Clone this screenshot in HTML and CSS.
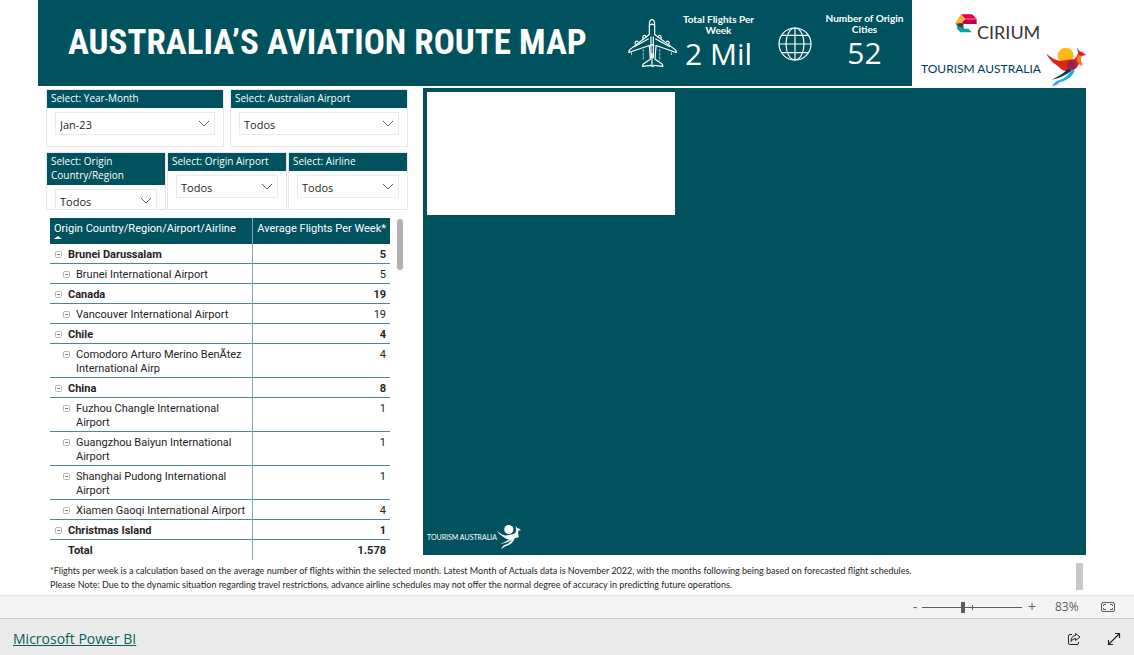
FILE: index.html
```html
<!DOCTYPE html>
<html lang="en">
<head>
<meta charset="utf-8">
<title>Australia’s Aviation Route Map</title>
<link rel="stylesheet" href="styles.css">
</head>
<body>
<svg class="sprites" aria-hidden="true">
  <symbol id="chevron" viewBox="0 0 12 7"><path d="M1 1l5 5 5-5" fill="none" stroke="#605e5c"/></symbol>
  <symbol id="minus-box" viewBox="0 0 7 7"><rect x=".5" y=".5" width="6" height="6" rx="1" fill="none" stroke="#b5b5b5"/><path d="M2 3.500h3" stroke="#777"/></symbol>
</svg>
<main class="report">
  <header class="banner">
    <div class="banner-main">
      <h1 class="title">AUSTRALIA’S AVIATION ROUTE MAP</h1>
      <svg class="plane" viewBox="22 58 148 146" fill="none" stroke="#fff" stroke-width="3.500" stroke-linejoin="round" aria-hidden="true">
        <path d="M88 104V76q0-16 8-16t8 16v28l62 46q3 4 2 8l-60-21-3 41 20 13q4 4 3 8l-25-3-5 4-5-4-25 3q-1-4 3-8l20-13-3-41-61 21q-1-4 2-8z"/>
        <path d="M90 76q6-5 12 0M89 137q7-4 14 0M96 160v38M93 110v65M100 110v65"/>
        <path d="M69 119v-9q5-7 9 0v3M114 113v-3q5-7 9 0v9M46 134v-7q4-6 9-1M138 126q5-5 9 1v7M43 141l43-24M149 141l-43-24"/>
        <path d="M70 148v30M119 148v35M35 157v12M154 157v10" stroke-width="2" stroke-dasharray="8 3"/>
      </svg>
      <section class="kpi"><h2 class="kpi-label">Total Flights Per Week</h2><p class="kpi-value">2 Mil</p></section>
      <svg class="globe" viewBox="472 81 102 102" fill="none" stroke="#fff" stroke-width="3.500" aria-hidden="true">
        <circle cx="523" cy="132" r="48"/><ellipse cx="523" cy="132" rx="27" ry="48"/>
        <path d="M523 84v96M475 132h96M483 106h80M483 158h80"/>
      </svg>
      <section class="kpi kpi-raised"><h2 class="kpi-label">Number of Origin Cities</h2><p class="kpi-value">52</p></section>
    </div>
    <div class="brands">
      <div class="cirium">
        <svg class="cirium-mark" viewBox="136 41 66 60" aria-hidden="true">
          <path d="M154 42h33l14 13h-35z" fill="#e5004f"/>
          <path d="M154 42l12 13-12 14h-17z" fill="#fbb034"/>
          <path d="M166 57h35v14h-35l-10-4z" fill="#c8003f"/>
          <path d="M137 69h17l10 9-14 11z" fill="#8a6d1f"/>
          <path d="M147 69h18l-8 9 8 8-14 2-8-10z" fill="#373535"/>
          <path d="M140 83l10-6 12 8h14l10 11h-34z" fill="#00a79d"/>
        </svg>
        <span>CIRIUM</span>
      </div>
      <div class="tourism">
        <span>TOURISM AUSTRALIA</span>
        <svg class="roo" viewBox="408 142 120 120" aria-hidden="true">
          <circle cx="467" cy="168" r="24" fill="#fdb913"/>
          <path d="M409 162c13 11 27 20 40 21 14 1 24-3 38-4 10-1 15-9 17-20l-3-15 8 11c7 2 14 6 19 11l-14 3c-2 13-5 23-12 32-9 11-20 17-32 14-20-5-20-12-32-20-12-7-22-20-29-33z" fill="#e2231a"/>
          <path d="M504 166l10 3c-3 13 0 21 6 28l-6-3 2 7c-9-6-14-13-15-23z" fill="#f47b20"/>
          <circle cx="485" cy="196" r="14" fill="#922255"/>
          <path d="M475 207c-15 13-23 20-51 33 23-4 43-13 60-27z" fill="#003b5c"/>
          <path d="M484 210c-13 22-22 27-38 32-9 4-13 8-20 18 8-1 17-6 23-12 23-7 38-17 45-35z" fill="#27aae1"/>
        </svg>
      </div>
    </div>
  </header>

  <div class="content">
    <div class="side">
      <form class="filters">
        <div class="filter-row">
          <div class="slicer"><label for="month">Select: Year-Month</label><div class="pick"><select id="month"><option>Jan-23</option></select><svg class="chev"><use href="#chevron"/></svg></div></div>
          <div class="slicer"><label for="au">Select: Australian Airport</label><div class="pick"><select id="au"><option>Todos</option></select><svg class="chev"><use href="#chevron"/></svg></div></div>
        </div>
        <div class="filter-row tight">
          <div class="slicer"><label for="country">Select: Origin Country/Region</label><div class="pick"><select id="country"><option>Todos</option></select><svg class="chev"><use href="#chevron"/></svg></div></div>
          <div class="slicer"><label for="origin">Select: Origin Airport</label><div class="pick"><select id="origin"><option>Todos</option></select><svg class="chev"><use href="#chevron"/></svg></div></div>
          <div class="slicer"><label for="airline">Select: Airline</label><div class="pick"><select id="airline"><option>Todos</option></select><svg class="chev"><use href="#chevron"/></svg></div></div>
        </div>
      </form>
      <div class="matrix">
        <table class="flights">
          <thead><tr><th scope="col">Origin Country/Region/Airport/Airline<span class="sort"></span></th><th scope="col">Average Flights Per Week*</th></tr></thead>
          <tbody>
            <tr class="group"><td><div class="node"><svg><use href="#minus-box"/></svg>Brunei Darussalam</div></td><td>5</td></tr>
            <tr><td><div class="node"><svg><use href="#minus-box"/></svg>Brunei International Airport</div></td><td>5</td></tr>
            <tr class="group"><td><div class="node"><svg><use href="#minus-box"/></svg>Canada</div></td><td>19</td></tr>
            <tr><td><div class="node"><svg><use href="#minus-box"/></svg>Vancouver International Airport</div></td><td>19</td></tr>
            <tr class="group"><td><div class="node"><svg><use href="#minus-box"/></svg>Chile</div></td><td>4</td></tr>
            <tr><td><div class="node"><svg><use href="#minus-box"/></svg>Comodoro Arturo Merino BenÃtez International Airp</div></td><td>4</td></tr>
            <tr class="group"><td><div class="node"><svg><use href="#minus-box"/></svg>China</div></td><td>8</td></tr>
            <tr><td><div class="node"><svg><use href="#minus-box"/></svg>Fuzhou Changle International Airport</div></td><td>1</td></tr>
            <tr><td><div class="node"><svg><use href="#minus-box"/></svg>Guangzhou Baiyun International Airport</div></td><td>1</td></tr>
            <tr><td><div class="node"><svg><use href="#minus-box"/></svg>Shanghai Pudong International Airport</div></td><td>1</td></tr>
            <tr><td><div class="node"><svg><use href="#minus-box"/></svg>Xiamen Gaoqi International Airport</div></td><td>4</td></tr>
            <tr class="group"><td><div class="node"><svg><use href="#minus-box"/></svg>Christmas Island</div></td><td>1</td></tr>
          </tbody>
          <tfoot><tr class="total"><td>Total</td><td>1.578</td></tr></tfoot>
        </table>
        <div class="thumb"></div>
      </div>
    </div>
    <section class="map" aria-label="Route map">
      <div class="map-card"></div>
      <div class="map-brand">
        <span>TOURISM AUSTRALIA</span>
        <svg class="roo-small" viewBox="408 142 120 120" fill="#fff" aria-hidden="true">
          <circle cx="467" cy="165" r="23"/>
          <path d="M409 172c13 11 27 22 40 22 14 0 24-5 38-6 10-1 15-9 17-20l-3-22 8 11c7 2 14 6 19 11l-14 3c0 12 0 20 3 32-9 0-14 4-24 6-20 8-36 5-46-3-14-8-29-18-38-34z"/>
          <path d="M475 208c-15 13-23 18-51 29 23-4 43-11 58-23zM488 206c-13 24-26 31-42 36-9 4-11 10-18 20 4-2 13-7 19-13 23-7 42-17 49-40z"/>
        </svg>
      </div>
    </section>
  </div>

  <div class="notes">
    <div>
      <p>*Flights per week is a calculation based on the average number of flights within the selected month. Latest Month of Actuals data is November 2022, with the months following being based on forecasted flight schedules.</p>
      <p>Please Note: Due to the dynamic situation regarding travel restrictions, advance airline schedules may not offer the normal degree of accuracy in predicting future operations.</p>
    </div>
    <div class="notes-thumb"></div>
  </div>
</main>

<div class="zoombar">
  <button type="button" class="step" aria-label="Zoom out">-</button>
  <div class="track"><input type="range" min="0" max="100" value="41" aria-label="Zoom"><i class="tick"></i></div>
  <button type="button" class="step" aria-label="Zoom in">+</button>
  <span class="percent">83%</span>
  <button type="button" class="icon" aria-label="Fit to page">
    <svg width="14" height="10" viewBox="0 0 14 10" fill="none" stroke="#605e5c"><rect x=".5" y=".5" width="13" height="9" rx="1.500"/><path d="M5 2.500H2.500V4M9 2.500h2.500V4M5 7.500H2.500V6M9 7.500h2.500V6"/></svg>
  </button>
</div>
<footer class="footer">
  <a href="#">Microsoft Power BI</a>
  <button type="button" class="icon" aria-label="Share">
    <svg width="14" height="14" viewBox="0 0 14 14" fill="none" stroke="#252423" stroke-linejoin="round"><path d="M5 2.500H3Q1.500 2.500 1.500 4v7q0 1.500 1.500 1.500h7q1.500 0 1.500-1.500v-1"/><path d="M8.500 1.500L13 5 8.500 8.500V6.500Q5.500 6.500 4 9.500q0-5.500 4.500-6z"/></svg>
  </button>
  <button type="button" class="icon" aria-label="Full screen">
    <svg width="14" height="14" viewBox="0 0 14 14" fill="none" stroke="#252423" stroke-width="1.200"><path d="M1.500 12.500l11-11M8 1.500h4.500V6M6 12.500H1.500V8"/></svg>
  </button>
</footer>
</body>
</html>
```
FILE: styles.css
```css
* { box-sizing: border-box; }
body {
  margin: 0;
  min-height: 100vh;
  display: flex;
  flex-direction: column;
  background: #fff;
  color: #252423;
  font: 10px/14px "Open Sans", "Noto Sans", sans-serif;
}
h1, h2, p { margin: 0; }
button { padding: 0; border: 0; background: none; color: #605e5c; font: inherit; }
.sprites { position: absolute; width: 0; height: 0; }
.report { flex: 1; display: flex; flex-direction: column; padding: 0 48px 0 38px; }

.banner { display: flex; height: 86px; }
.banner-main { flex: 1; display: flex; align-items: flex-start; background: #00525e; color: #fff; padding-right: 6px; }
.title {
  flex: 1;
  align-self: center;
  padding-left: 30px;
  white-space: nowrap;
  font: bold 35px/48px "Roboto Condensed", "Liberation Sans Narrow", sans-serif;
}
.plane { width: 50px; height: 49px; margin-top: 19px; }
.globe { width: 34px; height: 34px; margin: 27px 11px 0 18px; }
.kpi { width: 83px; padding-top: 14px; text-align: center; }
.kpi-raised { padding-top: 13px; }
.kpi-label { font: bold 10px/11px Lato, sans-serif; }
.kpi-value { font: 30px/36px "Open Sans", sans-serif; }
.brands { width: 174px; padding: 14px 0 0 9px; color: #373535; }
.cirium { display: flex; align-items: flex-start; height: 33px; padding-left: 34px; font: 18px/22px Lato, sans-serif; }
.cirium-mark { width: 22px; height: 20px; }
.cirium span { padding-top: 7px; }
.tourism { display: flex; justify-content: space-between; color: #003b5c; font: 12px/44px Lato, sans-serif; white-space: nowrap; }
.roo { flex: none; width: 40px; height: 40px; }

.content { display: flex; align-items: flex-start; margin-top: 2px; }
.side { width: 385px; padding: 1px 15px 0 8px; }
.filter-row { display: flex; gap: 6px; margin-bottom: 5px; }
.filter-row.tight { gap: 1px; margin-bottom: 8px; }
.slicer { flex: 1; height: 58px; overflow: hidden; border: 1px solid #e6e6e6; }
.slicer label { display: block; padding: 1px 4px 3px; background: #00525e; color: #fff; font-weight: 500; }
.pick { position: relative; margin: 4px 8px; height: 23px; border: 1px solid #eaeaea; }
.pick select { width: 100%; height: 100%; padding: 2px 4px 0; border: 0; appearance: none; background: #fff; color: #252423; font: 11px "Open Sans", sans-serif; }
.chev { position: absolute; right: 4px; top: 7px; width: 12px; height: 7px; pointer-events: none; }

.matrix { display: flex; align-items: flex-start; justify-content: space-between; padding: 0 5px 0 4px; }
.flights { width: 340px; border-collapse: separate; border-spacing: 0; table-layout: fixed; font: 11px/14px Roboto, "Open Sans", sans-serif; }
.flights th { height: 26px; padding: 4px 4px 0; vertical-align: top; background: #00525e; color: #fff; font-weight: 400; text-align: left; white-space: nowrap; }
.flights th:first-child { width: 203px; }
.flights th:last-child { text-align: right; }
.flights th:first-child, .flights td:first-child { border-right: 1px solid #80a8ae; }
.flights td { height: 20px; padding: 4px 4px 1px; vertical-align: top; border-bottom: 1px solid #4d868e; }
.flights td:last-child { text-align: right; }
.flights td:first-child { padding-right: 0; }
.group, .total { font-weight: 700; }
.node { display: flex; gap: 6px; padding-left: 9px; }
.group .node { padding-left: 1px; }
.node svg { flex: none; width: 7px; height: 7px; margin-top: 3px; }
.total td { border-bottom: 0; }
.total td:first-child { padding-left: 18px; }
.sort { display: block; width: 0; border: 4px solid transparent; border-top: 0; border-bottom: 3px solid #fff; }
.thumb { width: 6px; height: 51px; margin-top: 1px; border-radius: 3px; background: #b0b0b0; }

.map { flex: 1; display: flex; flex-direction: column; justify-content: space-between; min-height: 467px; padding: 4px; background: #00525e; }
.map-card { width: 248px; height: 123px; background: #fff; }
.map-brand { display: flex; align-items: center; color: #fff; font: 7px/10px Lato, sans-serif; padding-bottom: 2px; }
.roo-small { width: 24px; height: 24px; }

.notes { display: flex; justify-content: space-between; padding: 3px 3px 4px 12px; color: #252423; font: 9px/14px Lato, sans-serif; }
.notes p { padding-top: 1px; line-height: 13px; }
.notes-thumb { width: 7px; height: 27px; background: #c8c8c8; }

.zoombar { display: flex; align-items: center; justify-content: flex-end; height: 24px; padding-right: 19px; border-top: 1px solid #e1e1e1; border-bottom: 1px solid #c8c8c8; background: #f4f4f4; color: #605e5c; }
.step { width: 10px; font-size: 14px; line-height: 20px; }
.track { position: relative; display: flex; align-items: center; width: 100px; margin: 0 5px 0 2px; }
.track input { width: 100%; height: 12px; margin: 0; appearance: none; background: linear-gradient(#605e5c, #605e5c) center / 100% 1px no-repeat; }
.track input::-webkit-slider-thumb { appearance: none; width: 4px; height: 11px; background: #605e5c; }
.tick { position: absolute; left: 50%; top: 4px; width: 1px; height: 5px; background: #605e5c; }
.percent { width: 24px; margin: 0 22px 0 18px; font-size: 12px; }
.icon { display: flex; }
.footer { display: flex; align-items: center; gap: 26px; height: 36px; padding: 3px 13px 0; background: #eaeaea; }
.footer a { margin-right: auto; color: #0b6158; font-size: 14px; line-height: 20px; }
```
